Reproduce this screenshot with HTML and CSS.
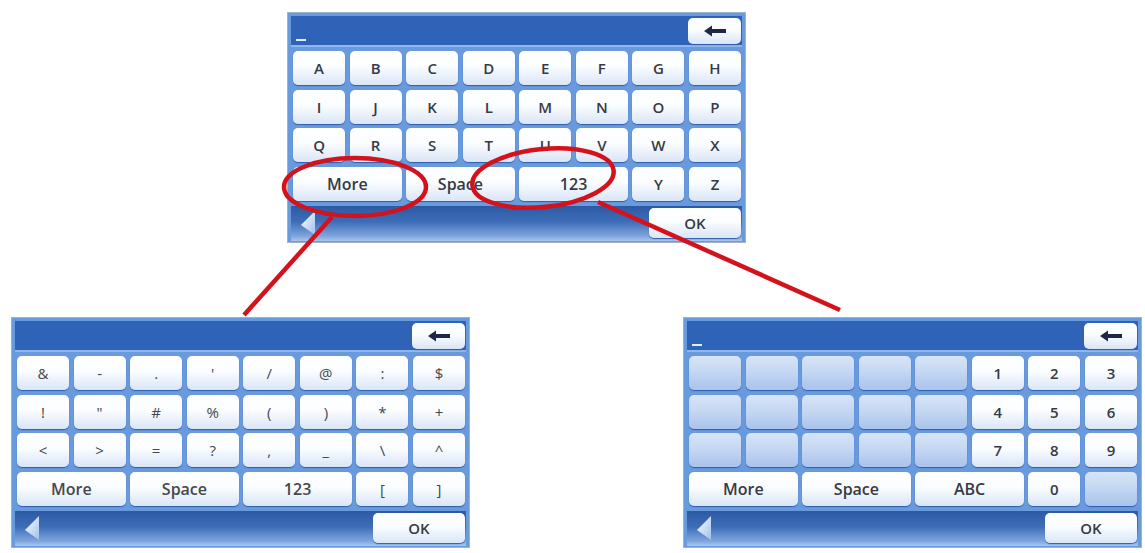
FILE: index.html
```html
<!DOCTYPE html>
<html lang="en">
<head>
    <meta charset="UTF-8">
    <title>Keyboard layouts</title>
    <link rel="stylesheet" href="styles.css">
</head>
<body>
    <div class="page">
        <div class="top-row">
            <!-- letters keyboard -->
            <div class="panel">
                <div class="header">
                    <span class="cursor"></span>
                    <div class="key back-key">
                        <svg width="24" height="12" viewBox="0 0 24 12"><path d="M1 6 L9 0.5 V4 H23 V8 H9 V11.5 Z" fill="#1c2846"/></svg>
                    </div>
                </div>
                <div class="keys">
                    <div class="key">A</div><div class="key">B</div><div class="key">C</div><div class="key">D</div>
                    <div class="key">E</div><div class="key">F</div><div class="key">G</div><div class="key">H</div>
                    <div class="key">I</div><div class="key">J</div><div class="key">K</div><div class="key">L</div>
                    <div class="key">M</div><div class="key">N</div><div class="key">O</div><div class="key">P</div>
                    <div class="key">Q</div><div class="key">R</div><div class="key">S</div><div class="key">T</div>
                    <div class="key">U</div><div class="key">V</div><div class="key">W</div><div class="key">X</div>
                    <div class="key wide">More</div><div class="key wide">Space</div><div class="key wide">123</div>
                    <div class="key">Y</div><div class="key">Z</div>
                </div>
                <div class="footer">
                    <svg class="prev" width="16" height="24" viewBox="0 0 16 24">
                        <defs><linearGradient id="tri1" x1="0" y1="0" x2="1" y2="1"><stop offset="0" stop-color="#ffffff"/><stop offset="1" stop-color="#9fc0ee"/></linearGradient></defs>
                        <polygon points="15,0 15,24 1,14" fill="url(#tri1)"/>
                    </svg>
                    <div class="key ok-key">OK</div>
                </div>
            </div>
        </div>

        <div class="bottom-row">
            <!-- symbols keyboard -->
            <div class="panel">
                <div class="header">
                    <span></span>
                    <div class="key back-key">
                        <svg width="24" height="12" viewBox="0 0 24 12"><path d="M1 6 L9 0.5 V4 H23 V8 H9 V11.5 Z" fill="#1c2846"/></svg>
                    </div>
                </div>
                <div class="keys symbols">
                    <div class="key">&amp;</div><div class="key">-</div><div class="key">.</div><div class="key">'</div>
                    <div class="key">/</div><div class="key">@</div><div class="key">:</div><div class="key">$</div>
                    <div class="key">!</div><div class="key">"</div><div class="key">#</div><div class="key">%</div>
                    <div class="key">(</div><div class="key">)</div><div class="key">*</div><div class="key">+</div>
                    <div class="key">&lt;</div><div class="key">&gt;</div><div class="key">=</div><div class="key">?</div>
                    <div class="key">,</div><div class="key">_</div><div class="key">\</div><div class="key">^</div>
                    <div class="key wide">More</div><div class="key wide">Space</div><div class="key wide">123</div>
                    <div class="key">[</div><div class="key">]</div>
                </div>
                <div class="footer">
                    <svg class="prev" width="16" height="24" viewBox="0 0 16 24">
                        <defs><linearGradient id="tri2" x1="0" y1="0" x2="1" y2="1"><stop offset="0" stop-color="#ffffff"/><stop offset="1" stop-color="#9fc0ee"/></linearGradient></defs>
                        <polygon points="15,0 15,24 1,14" fill="url(#tri2)"/>
                    </svg>
                    <div class="key ok-key">OK</div>
                </div>
            </div>

            <!-- numbers keyboard -->
            <div class="panel">
                <div class="header">
                    <span class="cursor"></span>
                    <div class="key back-key">
                        <svg width="24" height="12" viewBox="0 0 24 12"><path d="M1 6 L9 0.5 V4 H23 V8 H9 V11.5 Z" fill="#1c2846"/></svg>
                    </div>
                </div>
                <div class="keys">
                    <div class="key blank"></div><div class="key blank"></div><div class="key blank"></div><div class="key blank"></div>
                    <div class="key blank"></div><div class="key">1</div><div class="key">2</div><div class="key">3</div>
                    <div class="key blank"></div><div class="key blank"></div><div class="key blank"></div><div class="key blank"></div>
                    <div class="key blank"></div><div class="key">4</div><div class="key">5</div><div class="key">6</div>
                    <div class="key blank"></div><div class="key blank"></div><div class="key blank"></div><div class="key blank"></div>
                    <div class="key blank"></div><div class="key">7</div><div class="key">8</div><div class="key">9</div>
                    <div class="key wide">More</div><div class="key wide">Space</div><div class="key wide">ABC</div>
                    <div class="key">0</div><div class="key blank"></div>
                </div>
                <div class="footer">
                    <svg class="prev" width="16" height="24" viewBox="0 0 16 24">
                        <defs><linearGradient id="tri3" x1="0" y1="0" x2="1" y2="1"><stop offset="0" stop-color="#ffffff"/><stop offset="1" stop-color="#9fc0ee"/></linearGradient></defs>
                        <polygon points="15,0 15,24 1,14" fill="url(#tri3)"/>
                    </svg>
                    <div class="key ok-key">OK</div>
                </div>
            </div>
        </div>

        <!-- callouts drawn over the keyboards -->
        <svg class="callouts" width="1145" height="553" viewBox="0 0 1145 553">
            <g fill="none" stroke="#d4121c" stroke-width="4.5">
                <ellipse cx="355" cy="187" rx="71" ry="29"/>
                <ellipse cx="543" cy="178" rx="71" ry="29" transform="rotate(-6 543 178)"/>
                <line x1="332" y1="217" x2="244" y2="315"/>
                <line x1="598" y1="202" x2="840" y2="310"/>
            </g>
        </svg>
    </div>
</body>
</html>
```

FILE: styles.css
```css
body {
    margin: 0;
    background: #fff;
    font-family: "Open Sans", "DejaVu Sans", sans-serif;
}
.page {
    position: relative;
    width: 1145px;
    height: 553px;
    overflow: hidden;
}
.top-row {
    padding: 12px 0 0 287px;
}
.bottom-row {
    display: flex;
    gap: 213px;
    padding: 74px 0 0 11px;
}
.panel {
    width: 459px;
    height: 231px;
    box-sizing: border-box;
    border: 1px solid #a3b2c6;
    padding: 3px 3px 1px 3px;
    background: #6a9ade;
    display: flex;
    flex-direction: column;
}
.header {
    height: 29px;
    background: #2f63b7;
    border-bottom: 2px solid #92b5ea;
    display: flex;
    justify-content: space-between;
    align-items: flex-end;
    padding: 0 1px 0 5px;
}
.cursor {
    width: 10px;
    height: 2px;
    margin-bottom: 4px;
    background: #e4edfa;
}
.keys {
    display: grid;
    grid-template-columns: repeat(8, 1fr);
    grid-auto-rows: 34px;
    gap: 4.5px 4.5px;
    padding: 4px 1px 0 2px;
}
.key {
    border-radius: 5px;
    background: linear-gradient(#ffffff 0%, #fbfdff 45%, #d9e5f6 100%);
    box-shadow: 0 1px 1px #2f5ea8;
    display: flex;
    align-items: center;
    justify-content: center;
    font-size: 15px;
    font-weight: 600;
    color: #363a44;
}
.key.wide {
    grid-column: span 2;
    font-size: 16px;
}
.key.blank {
    background: linear-gradient(#d8e5f7 0%, #c3d6f2 50%, #a9c3ec 100%);
}
.symbols .key {
    font-weight: 400;
    color: #44484f;
}
.symbols .key.wide {
    font-weight: 600;
}
.back-key {
    width: 53px;
    height: 26px;
    margin-bottom: 1px;
}
.footer {
    flex: 1;
    margin-top: 5px;
    background: linear-gradient(#2c59a4 0%, #3e6db8 45%, #7da3dc 85%, #a9c6ee 100%);
    display: flex;
    justify-content: space-between;
    align-items: center;
    padding: 0 1px 0 9px;
}
.ok-key {
    width: 92px;
    height: 30px;
}
.callouts {
    position: absolute;
    left: 0;
    top: 0;
    pointer-events: none;
}
```
